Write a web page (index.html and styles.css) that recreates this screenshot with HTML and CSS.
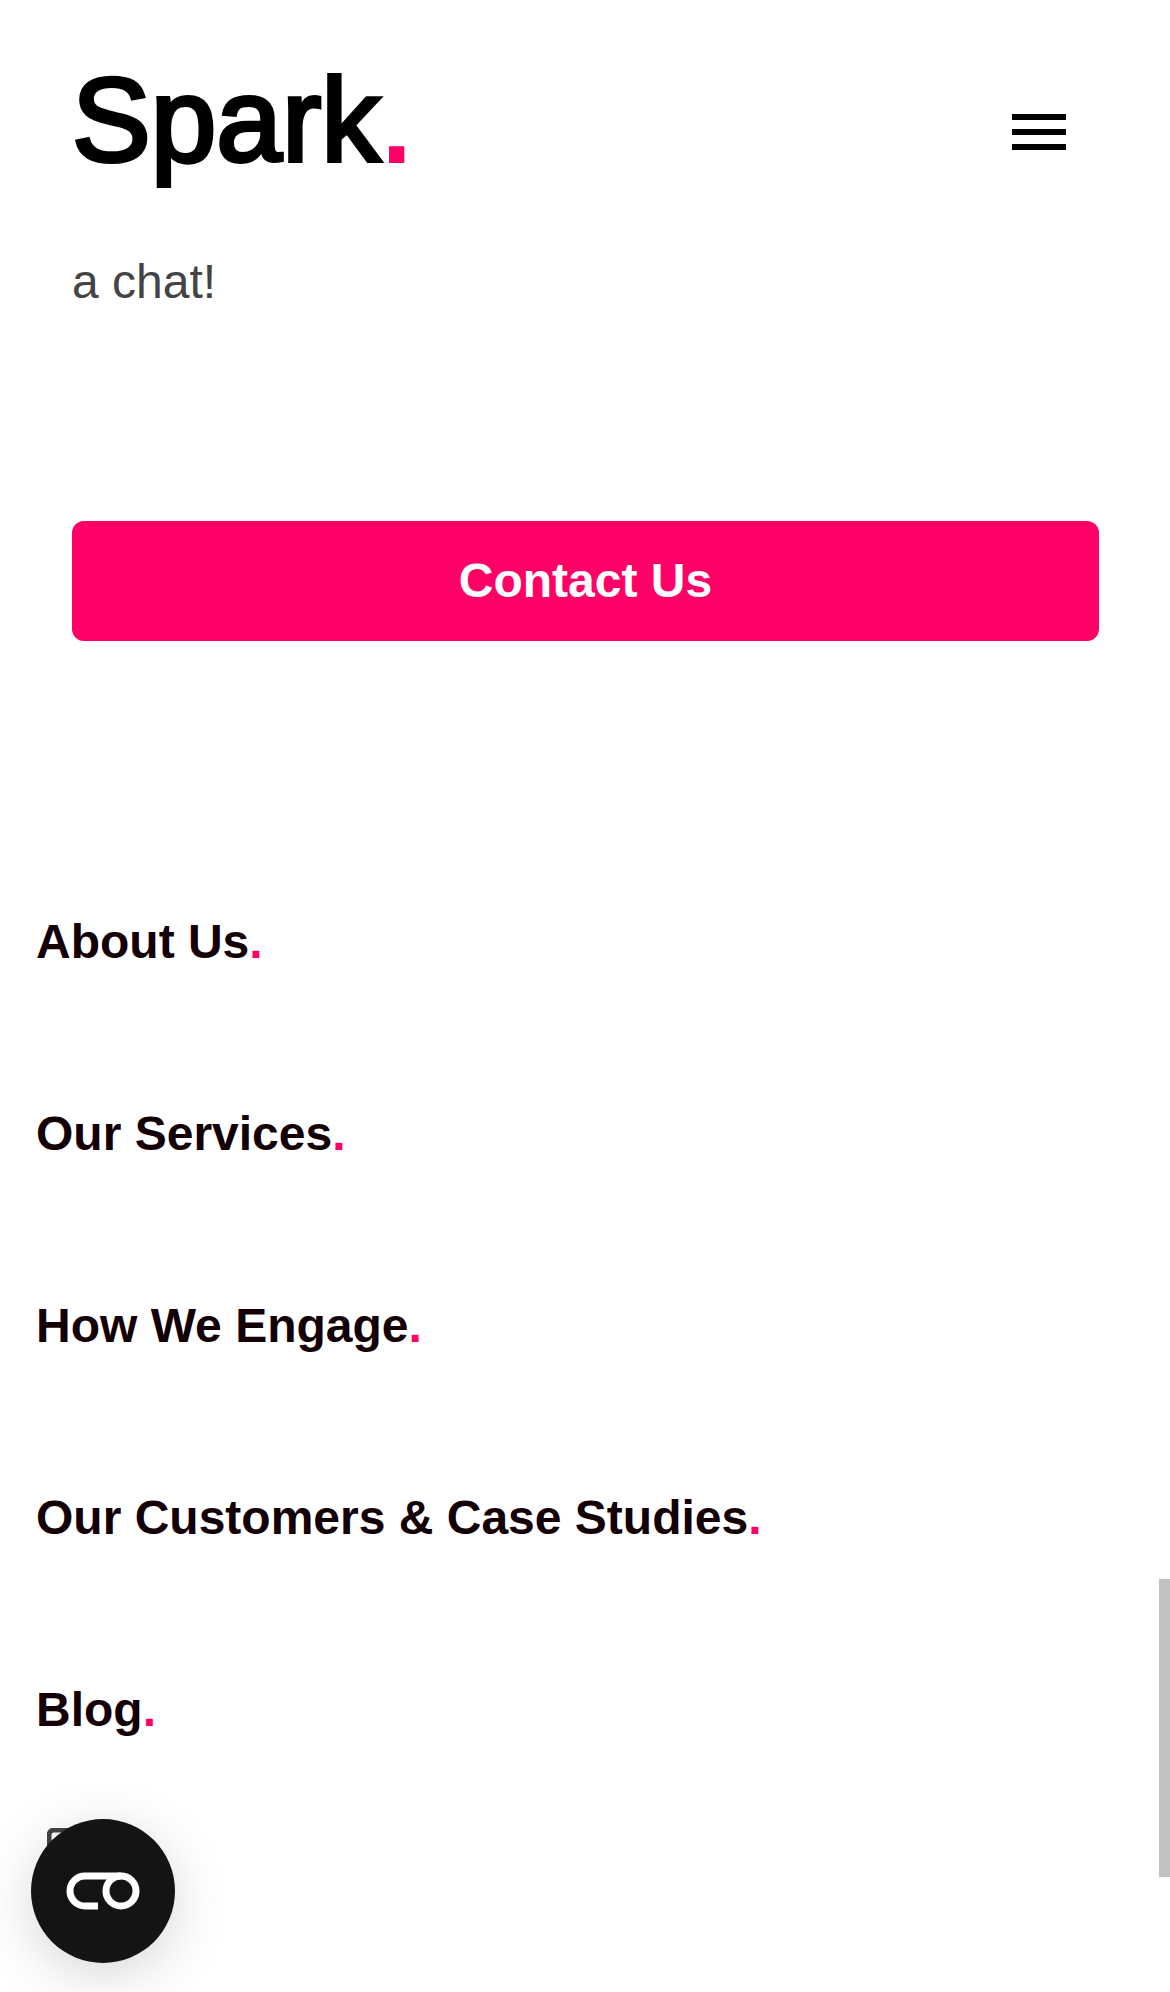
FILE: index.html
```html
<!DOCTYPE html>
<html lang="en">
<head>
  <meta charset="utf-8">
  <meta name="viewport" content="width=device-width, initial-scale=1">
  <title>Spark.</title>
  <link rel="stylesheet" href="styles.css">
</head>
<body>
  <header class="header">
    <a class="logo" href="#">Spark<span class="dot">.</span></a>
    <button class="menu-button" type="button" aria-label="Menu">
      <svg class="menu-icon" viewBox="0 0 54 36" aria-hidden="true">
        <path d="M0 0h54v6H0zM0 15h54v6H0zM0 30h54v6H0z"/>
      </svg>
    </button>
  </header>

  <main class="intro">
    <p class="intro-text">a chat!</p>
    <button class="contact-button" type="button">Contact Us</button>
  </main>

  <footer class="footer">
    <nav class="footer-nav" aria-label="Footer">
      <a class="footer-link" href="#">About Us<span class="dot">.</span></a>
      <a class="footer-link" href="#">Our Services<span class="dot">.</span></a>
      <a class="footer-link" href="#">How We Engage<span class="dot">.</span></a>
      <a class="footer-link" href="#">Our Customers &amp; Case Studies<span class="dot">.</span></a>
      <a class="footer-link" href="#">Blog<span class="dot">.</span></a>
    </nav>
    <a class="social-link" href="#" aria-label="LinkedIn">
      <svg class="social-icon" viewBox="0 0 48 48" aria-hidden="true">
        <rect x="2" y="2" width="44" height="44" rx="5"/>
      </svg>
    </a>
  </footer>

  <button class="cookie-button" type="button" aria-label="Cookie settings">
    <svg class="cookie-icon" viewBox="0 0 74 38" aria-hidden="true">
      <path d="M32 34H19a15 15 0 0 1 0-30H55"/>
      <circle cx="55" cy="19" r="15"/>
    </svg>
  </button>
  <div class="scroll-thumb" aria-hidden="true"></div>
</body>
</html>
```

FILE: styles.css
```css
* {
  box-sizing: border-box;
}

body {
  margin: 0;
  background: #fff;
  color: #444;
  font-family: "Liberation Sans", Arial, sans-serif;
  font-size: 48px;
  line-height: 72px;
}

a {
  text-decoration: none;
}

button {
  border: 0;
  padding: 0;
  font: inherit;
  cursor: pointer;
}

.header {
  display: flex;
  align-items: center;
  justify-content: space-between;
  min-height: 216px;
  padding: 48px 72px 0;
}

.logo {
  align-self: flex-start;
  color: #000;
  font-size: 118px;
  line-height: 144px;
  -webkit-text-stroke: 4px currentColor;
}

.dot {
  color: #ff0066;
}

.menu-button {
  display: flex;
  padding: 32px;
  background: none;
}

.menu-icon {
  width: 54px;
  height: 36px;
}

.intro {
  display: flex;
  flex-direction: column;
  gap: 203px;
  padding: 30px 71px 265px 72px;
}

.intro-text {
  margin: 0;
}

.contact-button {
  height: 120px;
  border-radius: 12px;
  background: #ff0066;
  color: #fff;
  font-weight: 700;
}

.footer {
  padding: 0 36px 48px;
}

.footer-nav {
  display: flex;
  flex-direction: column;
  align-items: flex-start;
  gap: 120px;
}

.footer-link {
  color: #120006;
  font-weight: 700;
}

.social-link {
  display: flex;
  margin-top: 82px;
  padding-left: 11px;
}

.social-icon {
  width: 48px;
  height: 48px;
  fill: none;
  stroke: #444;
  stroke-width: 5;
}

.cookie-button {
  position: fixed;
  bottom: 29px;
  left: 31px;
  display: flex;
  align-items: center;
  justify-content: center;
  width: 144px;
  height: 144px;
  border-radius: 50%;
  background: #141414;
  box-shadow: 0 12px 54px rgba(0, 0, 0, 0.16);
}

.cookie-icon {
  width: 74px;
  height: 38px;
  fill: none;
  stroke: #fff;
  stroke-width: 7;
}

.scroll-thumb {
  position: fixed;
  right: 0;
  bottom: 115px;
  width: 11px;
  height: 298px;
  background: #c1c1c1;
}
```
